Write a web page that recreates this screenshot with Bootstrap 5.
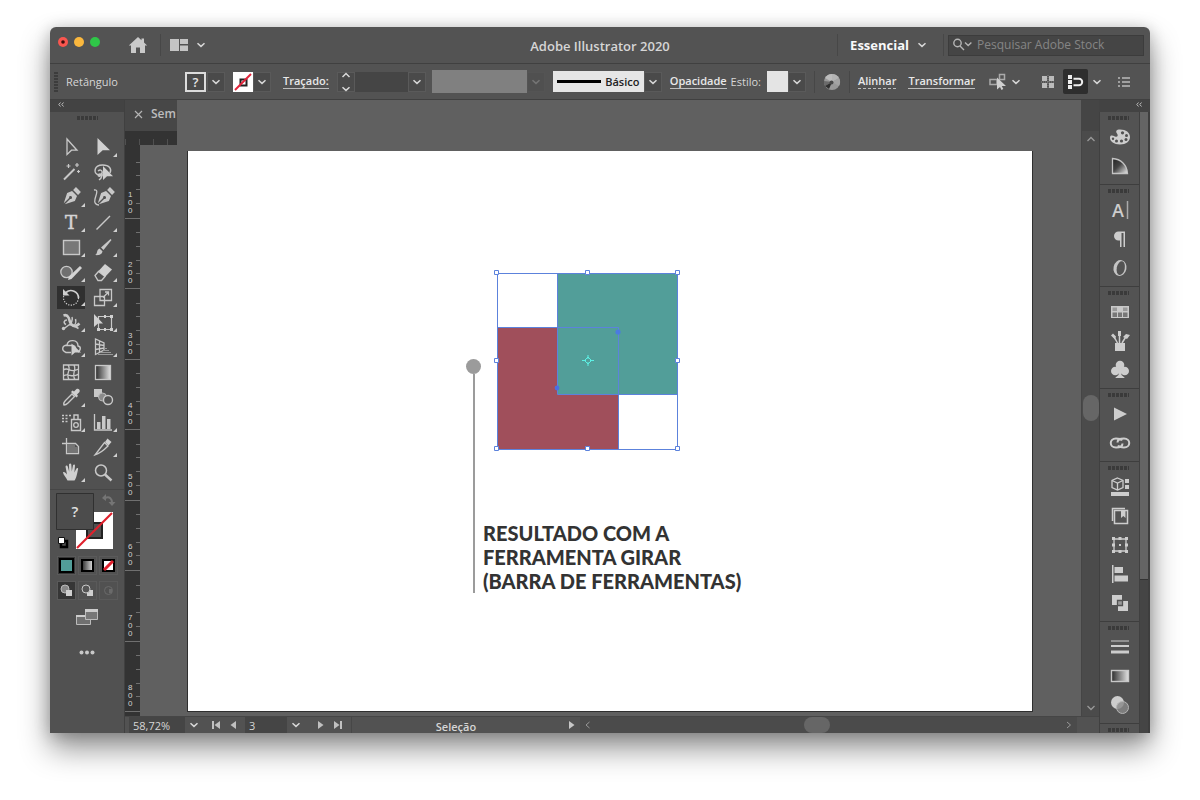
<!DOCTYPE html>
<html lang="pt-BR">
<head>
<meta charset="utf-8">
<meta name="viewport" content="width=device-width, initial-scale=1">
<title>Adobe Illustrator 2020</title>
<link rel="stylesheet" href="https://cdn.jsdelivr.net/npm/bootstrap@5.3.0/dist/css/bootstrap.min.css">
<style>
  body { font-family: "Open Sans", "Noto Sans", sans-serif; font-size: 11px; line-height: 16px; color: #d6d6d6; background: #fff; padding: 27px 50px 67px; height: 100vh; overflow: hidden; }
  button, input, select { font: inherit; color: inherit; }
  button { background: none; border: 0; padding: 0; display: flex; align-items: center; justify-content: center; flex-shrink: 0; }
  svg { display: block; flex-shrink: 0; }
  .app { background: #535353; border-radius: 6px 6px 0 0; box-shadow: 0 16px 30px rgba(0,0,0,.42), 0 2px 16px rgba(0,0,0,.22); }
  .titlebar { height: 37px; border-bottom: 1px solid #404040; font-size: 13px; }
  .app-name { font-size: 13px; font-weight: 600; line-height: 16px; margin: 2px 0 0; }
  .lights { gap: 6px; padding: 0 0 6px 8px; }
  .light { width: 10px; height: 10px; border-radius: 50%; }
  .vline { width: 1px; height: 22px; background: #474747; flex-shrink: 0; }
  .search { width: 196px; height: 21px; background: #454545; border: 1px solid #3c3c3c; }
  .search input { background: none; border: 0; outline: 0; padding: 0; min-width: 0; font-size: 12px; }
  .search input::placeholder { color: #858585; opacity: 1; }
  .controls { height: 36px; border-bottom: 1px solid #404040; }
  .controls > * { flex-shrink: 0; }
  .space-6 { margin-right: 6px; }
  .space-12 { margin-right: 12px; }
  .object-kind { width: 119px; }
  .grip-v { width: 4px; height: 20px; background: repeating-linear-gradient(#3c3c3c 0 2px, #535353 2px 3px); }
  .grip-h { height: 4px; width: 21px; background: repeating-linear-gradient(90deg, #3a3a3a 0 3px, #535353 3px 4px); }
  .drop { width: 18px; height: 20px; background: #4a4a4a; border: 1px solid #5a5a5a; }
  .field { height: 20px; background: #454545; border: 0; border-radius: 0; padding: 0 4px; }
  .lbl { color: #e8e8e8; font-weight: 600; text-decoration: none; line-height: 14px; border-bottom: 1px solid #bdbdbd; }
  .lbl:hover { color: #fff; }
  .dotted { border-bottom-style: dashed; }
  .strip { height: 12px; background: #434343; color: #c4c4c4; }
  .tools { width: 75px; border-right: 1px solid #404040; background: #515151; }
  .tools > .grip-h { margin: 4px 0 15px; }
  .rule { width: 100%; height: 1px; background: #464646; }
  .tool-grid { display: grid; grid-template-columns: 28px 28px; column-gap: 4px; grid-auto-rows: 25px; }
  .tool { position: relative; }
  .tool.more::after { content: ""; position: absolute; right: 0; bottom: 3px; border: 2px solid; border-color: transparent #d0d0d0 #d0d0d0 transparent; }
  .tool.active { background: #303030; margin: 1px 0; }
  .mini { width: 19px; height: 19px; border: 1px solid #5a5a5a; }
  .mini.on { background: #363636; }
  .mini-row { gap: 2px; margin-top: 6px; }
  .document { background: #606060; }
  .tab { width: 52px; height: 31px; background: #474747; font-size: 12px; font-weight: 600; color: #bdbdbd; white-space: nowrap; padding: 0 0 3px 9px; }
  .hruler { width: 52px; height: 14px; background: repeating-linear-gradient(90deg, #505050 0 1px, transparent 1px 14px) 0 8px no-repeat #333; }
  .vruler { width: 15px; background: #333; font-size: 8px; line-height: 8px; color: #d0d0d0; padding: 3px 0 4px; font-family: "Liberation Sans", sans-serif; }
  .vruler > div { display: flex; flex-direction: column; justify-content: flex-end; flex: 1 1 0; width: 100%; padding: 0 0 3px 3px; border-bottom: 1px solid #707070;
    background: linear-gradient(#707070, #707070) right 20%/4px 1px no-repeat, linear-gradient(#707070, #707070) right 40%/4px 1px no-repeat, linear-gradient(#707070, #707070) right 60%/4px 1px no-repeat, linear-gradient(#707070, #707070) right 80%/4px 1px no-repeat; }
  .artboard { background: #fff; border: 1px solid #2f2f2f; border-width: 0 1px 1px; margin: 6px 48px 4px 47px; color: #333; padding: 119px 0 0 278px; }
  .pin { width: 15px; padding-top: 89px; }
  .pin-head { width: 15px; height: 15px; border-radius: 50%; background: #9b9b9b; flex-shrink: 0; }
  .pin-line { width: 2px; background: #9b9b9b; }
  .shapes { margin-left: 12px; }
  .caption-text { font-family: Lato, sans-serif; font-weight: 900; font-size: 20px; line-height: 24px; margin: 69px 0 0 2px; white-space: nowrap; }
  .scroll-v { width: 18px; background: #4b4b4b; border-left: 1px solid #454545; }
  .scroll-v .cap { height: 31px; background: #454545; width: 100%; }
  .scroll-v .before { flex: 25 0 0; }
  .scroll-v .after { flex: 28 0 0; }
  .knob { background: #666; border-radius: 8px; }
  .status { height: 17px; overflow: hidden; background: #525252; border-top: 1px solid #464646; }
  .status .field { height: 16px; line-height: 19px; font-size: 11px; }
  .status-text { width: 208px; padding-top: 3px; }
  .scroll-h { background: #4b4b4b; margin: 0 22px 0 4px; }
  .dock { width: 51px; }
  .panels { width: 41px; border: 1px solid #404040; border-width: 0 1px; overflow: hidden; }
  .panel { border-bottom: 1px solid #3e3e3e; padding: 4px 0 4px; flex-shrink: 0; display: flex; flex-direction: column; align-items: center; }
  .panel button { height: 29px; width: 39px; }
  .panel .grip-h { margin-bottom: 2px; margin-right: 3px; }
  .side { background: #454545; border-right: 2px solid #3e3e3e; }
  .side-thumb { height: 468px; background: #646464; border-bottom: 1px solid #333; }
</style>
</head>
<body>
<svg width="0" height="0" class="position-absolute" aria-hidden="true">
  <symbol id="down" viewBox="0 0 10 6"><path d="M1.5 1.2 5 4.4 8.500 1.200" fill="none" stroke="#d8d8d8" stroke-width="1.500"/></symbol>
  <symbol id="nib" viewBox="0 0 28 25"><g transform="rotate(45 14 12)"><path d="M10.500 1.500h7v4h-7z" fill="#c8c8c8"/><path d="M10.500 7h7l2 5-4.800 9.500V14a1.500 1.500 0 1 0-1.400 0v7.500L8.500 12z" fill="#c8c8c8"/></g></symbol>
  <linearGradient id="g1"><stop offset="0" stop-color="#2c2c2c"/><stop offset="1" stop-color="#e2e2e2"/></linearGradient>
  <linearGradient id="g2" x1="0" y1="0" x2="1" y2="1"><stop offset="0" stop-color="#222"/><stop offset=".45" stop-color="#444"/><stop offset="1" stop-color="#eee"/></linearGradient>
</svg>

<main class="app d-flex flex-column h-100">
  <header class="titlebar d-flex align-items-center flex-shrink-0">
    <div class="col d-flex align-items-center">
      <div class="lights d-flex">
        <button class="light" style="background:#f9564f" aria-label="Fechar"><svg width="4" height="4"><circle cx="2" cy="2" r="1.800" fill="#3c0d0b"/></svg></button>
        <button class="light" style="background:#fbb83e" aria-label="Minimizar"></button>
        <button class="light" style="background:#2fc748" aria-label="Ampliar"></button>
      </div>
      <button class="ms-4 ps-1 space-12" aria-label="Início"><svg width="20" height="18" viewBox="0 0 20 18"><path d="M10 1 0.800 9.500H3V17h5v-5.500h4V17h5V9.500h2.200L16 6.500V2.500h-2.500v1.700z" fill="#c9c9c9"/></svg></button>
      <span class="vline"></span>
      <button class="ps-2 gap-2" aria-label="Organizar documentos"><svg width="19" height="12"><path d="M1 0h9v12H1zM11 0h8v5h-8zM11 6.500h8V12h-8z" fill="#c4c4c4"/></svg><svg width="10" height="6"><use href="#down"/></svg></button>
    </div>
    <h1 class="app-name">Adobe Illustrator 2020</h1>
    <div class="col d-flex align-items-center justify-content-end">
      <span class="vline"></span>
      <button class="fw-bold text-light ms-2 me-3 gap-2 ps-1">Essencial <svg width="10" height="6"><use href="#down"/></svg></button>
      <span class="vline"></span>
      <div class="search d-flex align-items-center ms-1 space-6 px-1">
        <svg width="20" height="14" viewBox="0 0 20 14"><circle cx="4.500" cy="5" r="3.700" fill="none" stroke="#b5b5b5" stroke-width="1.400"/><path d="m7 8 4 4M12 4.500l3.200 3 3.200-3" fill="none" stroke="#b5b5b5" stroke-width="1.400"/></svg>
        <input class="flex-fill ps-1" type="text" placeholder="Pesquisar Adobe Stock" aria-label="Pesquisar Adobe Stock">
      </div>
    </div>
  </header>

  <section class="controls d-flex align-items-center flex-shrink-0" aria-label="Controle">
    <span class="grip-v ms-1 me-2"></span>
    <span class="object-kind">Retângulo</span>
    <button aria-label="Preenchimento"><svg width="22" height="20"><rect x="1" y="1" width="19" height="18" fill="#4a4a4a" stroke="#dcdcdc" stroke-width="2"/><text x="10.500" y="15" font-size="13" font-weight="600" text-anchor="middle" fill="#e4e4e4">?</text></svg></button>
    <button class="drop me-2" aria-label="Opções de preenchimento"><svg width="10" height="6"><use href="#down"/></svg></button>
    <button aria-label="Traço"><svg width="20" height="20"><path d="M0 0h20v20H0z" fill="#fff"/><path d="M7.500 7.500h6v6h-6z" fill="#fff" stroke="#222" stroke-width="2"/><path d="M2 18 18 2" stroke="#e2243b" stroke-width="2"/></svg></button>
    <button class="drop space-12" aria-label="Opções de traço"><svg width="10" height="6"><use href="#down"/></svg></button>
    <a class="lbl" href="#">Traçado:</a>
    <button class="drop flex-column gap-2 ms-2" aria-label="Ajustar espessura"><svg width="10" height="6" viewBox="0 0 10 6"><path d="M1.500 5 5 1.500 8.500 5" fill="none" stroke="#d8d8d8" stroke-width="1.500"/></svg><svg width="10" height="6"><use href="#down"/></svg></button>
    <input class="field" style="width:53px" type="text" aria-label="Espessura">
    <button class="drop space-6" aria-label="Espessuras"><svg width="10" height="6"><use href="#down"/></svg></button>
    <span style="width:95px;height:23px;background:#808080"></span>
    <button class="drop me-2 opacity-25" aria-label="Perfil"><svg width="10" height="6"><use href="#down"/></svg></button>
    <button class="px-1" style="width:91px;height:21px;background:#e6e6e6;color:#222;font-weight:600" aria-label="Pincel Básico"><svg width="44" height="3"><path d="M0 0h44v3H0z"/></svg><span class="ms-1">Básico</span></button>
    <button class="drop me-2" aria-label="Pincéis"><svg width="10" height="6"><use href="#down"/></svg></button>
    <a class="lbl me-1" href="#">Opacidade</a>
    <span class="space-6">Estilo:</span>
    <button style="width:21px;height:21px;background:#e4e4e4" aria-label="Estilo gráfico"></button>
    <button class="drop me-2" aria-label="Estilos"><svg width="10" height="6"><use href="#down"/></svg></button>
    <span class="vline me-2"></span>
    <button class="me-2" aria-label="Recolorir arte"><svg width="18" height="18"><circle cx="9" cy="9" r="8" fill="#999"/><path d="M9 9V1a8 8 0 0 1 7 4z" fill="#b4b4b4"/><path d="M9 9 16 5a8 8 0 0 1 0 8z" fill="#a4a4a4"/><path d="M9 9 2 5A8 8 0 0 1 9 1z" fill="#bcbcbc"/><path d="m9 9-7 4a8 8 0 0 1-1-5z" fill="#6a6a6a"/><path d="m9 9-3 7-4-3z" fill="#2f2f2f"/><circle cx="8.500" cy="9.500" r="2" fill="#484848"/></svg></button>
    <span class="vline me-2"></span>
    <a class="lbl dotted space-12" href="#">Alinhar</a>
    <a class="lbl" href="#">Transformar</a>
    <button class="ms-auto me-1" aria-label="Isolar"><svg width="18" height="18"><path d="M1 6.500h7v5H1zM10.500 1.500h5v5h-5z" fill="none" stroke="#aaa" stroke-width="1.500"/><path d="M8 4.500v12l3-2.500 1.500 3 1.800-1-1.500-3H17z" fill="#d0d0d0"/></svg></button>
    <button class="me-3" aria-label="Opções"><svg width="10" height="6"><use href="#down"/></svg></button>
    <button class="mx-2 ms-1" aria-label="Pixels"><svg width="14" height="14"><path d="M1 1h5v5H1zM8 1h5v5H8zM1 8h5v5H1zM8 8h5v5H8z" fill="#bbb"/><path d="M7 0v14M0 7h14" stroke="#888" stroke-dasharray="1 1"/></svg></button>
    <button style="width:25px;height:25px;background:#2e2e2e;border-radius:2px" aria-label="Encaixar"><svg width="17" height="16"><path d="M1 1h4v4H1zM1 6h4v4H1zM1 11h4v4H1z" fill="#eee"/><path d="M6.500 4.800H12a3.200 3.200 0 0 1 0 6.400H6.500" fill="none" stroke="#eee" stroke-width="2"/></svg></button>
    <button class="space-12 ps-1" aria-label="Opções de encaixe"><svg width="10" height="6"><use href="#down"/></svg></button>
    <button class="me-3 px-1" aria-label="Menu"><svg width="12" height="10"><path d="M0 1h2M0 5h2M0 9h2M4 1h8M4 5h8M4 9h8" stroke="#bbb" stroke-width="1.500"/></svg></button>
  </section>

  <div class="d-flex flex-fill overflow-hidden" style="min-height:0">
    <aside class="tools d-flex flex-column flex-shrink-0 align-items-center" aria-label="Ferramentas">
      <div class="strip w-100 ps-2 flex-shrink-0"><svg width="6" height="9"><path d="M2.500 2.500.8 4.500l1.700 2M5.500 2.500l-1.700 2 1.700 2" fill="none" stroke="#bbb"/></svg></div>
      <span class="grip-h"></span>
      <div class="tool-grid">
        <button class="tool" aria-label="Seleção"><svg width="28" height="25"><path d="M10 4v15.500l4.500-4.300H20z" fill="none" stroke="#c8c8c8" stroke-width="1.300"/></svg></button>
        <button class="tool more" aria-label="Seleção direta"><svg width="28" height="25"><path d="M8.500 3v17l5.200-4.800H21z" fill="#d0d0d0"/></svg></button>
        <button class="tool" aria-label="Varinha mágica"><svg width="28" height="25"><path d="M7 19.500 17.500 9" stroke="#c8c8c8" stroke-width="2"/><path d="M11.500 4v4M9.500 6h4M20 3v4M18 5h4M21.500 10v3M20 11.500h3" stroke="#c8c8c8" stroke-width="1.200"/></svg></button>
        <button class="tool" aria-label="Laço"><svg width="28" height="25"><path d="M14 15H9.500C4 13 5 5 13.500 5c7 0 9.500 4 7.500 8M9 11c4-3 6 2 2 5-2 1-3-2 0-2s2 4-1 6" fill="none" stroke="#c8c8c8" stroke-width="1.400"/><path d="M14 6v14l4-3.800h6z" fill="#d0d0d0"/></svg></button>
        <button class="tool more" aria-label="Caneta"><svg width="28" height="25"><use href="#nib"/></svg></button>
        <button class="tool" aria-label="Curvatura"><svg width="28" height="25"><use href="#nib" x="2"/><path d="M5 5c5-1 2 5 1 9s1 6 4 6" fill="none" stroke="#c8c8c8" stroke-width="1.300"/></svg></button>
        <button class="tool more" aria-label="Texto"><svg width="28" height="25"><text x="14" y="19" text-anchor="middle" font-family="DejaVu Serif" font-weight="400" font-size="18" fill="#d4d4d4" stroke="#d4d4d4" stroke-width=".5">T</text></svg></button>
        <button class="tool more" aria-label="Linha"><svg width="28" height="25"><path d="M7.500 19.500 21 6" stroke="#c8c8c8" stroke-width="1.400"/></svg></button>
        <button class="tool more" aria-label="Retângulo"><svg width="28" height="25"><rect x="6.500" y="5.500" width="16" height="14" fill="#787878" stroke="#c8c8c8" stroke-width="1.400"/></svg></button>
        <button class="tool more" aria-label="Pincel"><svg width="28" height="25"><path d="m12 12.500 9.500-8.500 1 1-8 10zM6 20c3-1 1-5 4.500-6.500l3 2.700C13 20 9 20.500 6 20z" fill="#c8c8c8"/></svg></button>
        <button class="tool more" aria-label="Shaper"><svg width="28" height="25"><circle cx="9.500" cy="12" r="5.700" fill="#707070" stroke="#c8c8c8" stroke-width="1.300"/><path d="m11 20 1-3.500L23 6l2 2-10.500 11z" fill="#d4d4d4"/></svg></button>
        <button class="tool more" aria-label="Borracha"><svg width="28" height="25"><path d="m6 15.500 3.500-4 6.500 5-3.500 4H9z" fill="none" stroke="#c8c8c8" stroke-width="1.300"/><path d="m9.500 11 6.500-7 7 5.500-7 7.500z" fill="#d0d0d0"/></svg></button>
        <button class="tool more active" aria-label="Girar"><svg width="28" height="23"><path d="M9 6.500A7.500 7.500 0 0 1 21.500 12" fill="none" stroke="#d0d0d0" stroke-width="1.700"/><path d="M21.500 12A7.500 7.500 0 1 1 7 9" fill="none" stroke="#d0d0d0" stroke-width="1.200" stroke-dasharray="1.200 1.400"/><path d="M6 3v6.500h6.500z" fill="#d0d0d0"/></svg></button>
        <button class="tool more" aria-label="Escala"><svg width="28" height="25"><path d="M5.500 11.500h10v9h-10zM11 4.500h11.500v11H11zM14 12.500l5-5M16 7h3.500v3.500" fill="none" stroke="#c8c8c8" stroke-width="1.300"/></svg></button>
        <button class="tool more" aria-label="Largura"><svg width="28" height="25"><path d="M6.500 5.500c3-1 4 0 5 2s1 5 3 7 5 2 8-1" fill="none" stroke="#c8c8c8" stroke-width="2.600"/><path d="M10 10c-3 0-4 3-1 4.500M12 15c2 0 4-6 3-8M16 16c3-1 3-5 2.500-7M6.500 19l6-4.500 4 1 5 3" fill="none" stroke="#c8c8c8" stroke-width="1.500"/><circle cx="6.500" cy="18.500" r="1.700" fill="#c8c8c8"/></svg></button>
        <button class="tool more" aria-label="Transformação livre"><svg width="28" height="25"><path d="M9.500 6.500h13v13h-13z" fill="none" stroke="#c8c8c8" stroke-width="1.200"/><path d="M5 4v13l4-3.500h5zM21 5h3v3h-3zM21 18h3v3h-3zM8 18h3v3H8zM15 5h2v3h-2zM15 18h2v3h-2z" fill="#d0d0d0"/></svg></button>
        <button class="tool more" aria-label="Construtor de formas"><svg width="28" height="25"><path d="M14 17.500H9c-5-2-4-7 1-7.500 1-6 11-6 11 1 4 1 2 5 0 6M8 10.500h8c3 1 3 3 2 5" fill="none" stroke="#c8c8c8" stroke-width="1.400"/><path d="M14.500 8.500v12l3.500-3h6z" fill="#d0d0d0"/></svg></button>
        <button class="tool more" aria-label="Perspectiva"><svg width="28" height="25"><path d="M6.500 4v15.500L15 15V8zM6.500 9l8.500 1.500M6.500 14.500 15 13M10.500 6v11" fill="none" stroke="#c8c8c8" stroke-width="1.300"/><path d="M15 13.500h3M14 15.500h6M12 17.500h10M9 19.500h15" stroke="#999"/></svg></button>
        <button class="tool" aria-label="Malha"><svg width="28" height="25"><path d="M6.500 5h15v14.500h-15zM6.500 10c5-4 6 4 15-1M6.500 16c5-4 8 3 15-2M11 5c4 5-3 8 1 14.500M17 5c3 5-3 9 1 14.500" fill="none" stroke="#c8c8c8" stroke-width="1.300"/></svg></button>
        <button class="tool" aria-label="Degradê"><svg width="28" height="25"><rect x="6.500" y="5.500" width="15" height="14" fill="url(#g1)" stroke="#c8c8c8" stroke-width="1.300"/></svg></button>
        <button class="tool more" aria-label="Conta-gotas"><svg width="28" height="25"><path d="M7 20c-1-2 0-3 1.500-4.500L15 9l2.500 2.500-6.500 6.500c-1.500 1.500-2.500 2-4 2z" fill="none" stroke="#c8c8c8" stroke-width="1.400"/><path d="m14 7 1.500-1.500 1.500 1 2.500-2.500c2-1 4 1 3 3L20 9.500l1 1.500-1.500 1.500z" fill="#d0d0d0"/></svg></button>
        <button class="tool" aria-label="Mistura"><svg width="28" height="25"><path d="M5 4h8v8H5z" fill="#c8c8c8"/><circle cx="13.500" cy="12" r="4" fill="#8a8a8a" stroke="#bbb"/><circle cx="19" cy="15" r="4.500" fill="#525252" stroke="#c8c8c8" stroke-width="1.400"/></svg></button>
        <button class="tool more" aria-label="Pulverizador"><svg width="28" height="25"><path d="M14.500 9.500h9v11h-9zM17 9V5h4v4" fill="none" stroke="#c8c8c8" stroke-width="1.400"/><circle cx="19" cy="15" r="2.300" fill="none" stroke="#c8c8c8" stroke-width="1.300"/><path d="M5 5.500h2M8.500 5.500h2M12 5.500h2M5 8.500h2M8.500 8.500h2M5 11.500h2M8.500 11.500h2" stroke="#c8c8c8" stroke-width="1.600"/></svg></button>
        <button class="tool more" aria-label="Gráfico de colunas"><svg width="28" height="25"><path d="M5.500 4v16H23" fill="none" stroke="#c8c8c8" stroke-width="1.300"/><path d="M8 12h3.500v7H8zM13 6h3.500v13H13zM18 9h3.500v10H18z" fill="#c8c8c8"/></svg></button>
        <button class="tool" aria-label="Prancheta"><svg width="28" height="25"><path d="M9.500 3v15.500h12v-7l-3-3H5" fill="none" stroke="#c8c8c8" stroke-width="1.300"/><path d="M10 9h8v3h3v6H10z" fill="#757575"/></svg></button>
        <button class="tool more" aria-label="Fatia"><svg width="28" height="25"><path d="m6 20 9.500-12.500 3.500 3.500c-4 4-7 7-13 9z" fill="none" stroke="#c8c8c8" stroke-width="1.300"/><path d="m16 7 2.500-3.500 4 3.500-3 3.500z" fill="#d0d0d0"/></svg></button>
        <button class="tool more" aria-label="Mão"><svg width="28" height="25"><path d="M10.500 20.500C9 17.500 6.500 15 6 12.500c1-1 2.500 0 4 2L8.500 6.500c.5-1.500 2-1 2.300.3l1.400 5L12 4.500c.5-1.500 2-1.500 2.300 0l.5 7 1.200-6.300c.6-1.200 2-1 2 .4l-.6 7 2-4c.8-1 2-.5 1.700.7-1 4-1.600 9-3.600 11.200z" fill="#d0d0d0"/></svg></button>
        <button class="tool" aria-label="Zoom"><svg width="28" height="25"><circle cx="12" cy="10.500" r="5.500" fill="none" stroke="#c8c8c8" stroke-width="1.500"/><path d="m16 14.500 6.500 6" stroke="#c8c8c8" stroke-width="2.400"/></svg></button>
      </div>
      <span class="rule mt-1"></span>
      <svg width="62" height="60" viewBox="0 0 62 60" role="img" aria-label="Preenchimento e traço">
        <path d="M20 22h37v37H20z" fill="#fff"/><path d="M31 33h15v15H31z" fill="#515151" stroke="#222" stroke-width="2"/><path d="m21 58 35-35" stroke="#e0202c" stroke-width="2.200"/>
        <path d="M.5 3.500h37v36H.5z" fill="#4c4c4c" stroke="#303030"/><text x="19" y="27" text-anchor="middle" font-size="15" font-weight="600" fill="#e0e0e0">?</text>
        <path d="M49 8c5-2 7 1 7 5" fill="none" stroke="#757575" stroke-width="2"/><path d="m46 8 4-4v7zM52.500 12h7l-3.500 4z" fill="#757575"/>
        <path d="M5 51h6v6H5z" fill="#515151" stroke="#000" stroke-width="2.500"/><path d="M2.500 47.500h6v6h-6z" fill="#fff" stroke="#111"/>
      </svg>
      <div class="mini-row d-flex">
        <button class="mini on" aria-label="Cor"><svg width="15" height="15"><path d="M1 1h13v13H1z" fill="#529e99" stroke="#000" stroke-width="2"/></svg></button>
        <button class="mini" aria-label="Degradê"><svg width="15" height="15"><path d="M2 2h11v11H2z" fill="url(#g1)" stroke="#000" stroke-width="2"/></svg></button>
        <button class="mini" aria-label="Nenhum"><svg width="15" height="15"><path d="M2 2h11v11H2z" fill="#fff" stroke="#000" stroke-width="2"/><path d="m3 12 9-9" stroke="#e0202c" stroke-width="3"/></svg></button>
      </div>
      <div class="mini-row d-flex mb-2">
        <button class="mini on" aria-label="Desenho normal"><svg width="13" height="13"><circle cx="5" cy="5" r="4" fill="#888" stroke="#bbb"/><path d="M6 6h6v6H6z" fill="#d0d0d0"/></svg></button>
        <button class="mini" aria-label="Desenhar atrás"><svg width="13" height="13"><path d="M6 6h6v6H6z" fill="#d0d0d0"/><circle cx="5" cy="5" r="4" fill="#555" stroke="#c8c8c8"/></svg></button>
        <button class="mini" aria-label="Desenhar dentro"><svg width="13" height="13"><circle cx="6.500" cy="6.500" r="4" fill="none" stroke="#6a6a6a"/><path d="M7 5h3v4H7z" fill="#6a6a6a"/></svg></button>
      </div>
      <button aria-label="Modo de tela"><svg width="24" height="18"><path d="M1.500 7.500h14v9h-14z" fill="#707070" stroke="#bbb"/><path d="M1 7h15v2H1z" fill="#ccc"/><path d="M10.500 1.500h12v10h-12z" fill="#777" stroke="#bbb"/><path d="M10 1h13v3H10z" fill="#ccc"/></svg></button>
      <button class="mt-3 pt-2" aria-label="Editar barra de ferramentas"><svg width="16" height="5"><circle cx="2.500" cy="2.500" r="2" fill="#c8c8c8"/><circle cx="8" cy="2.500" r="2" fill="#c8c8c8"/><circle cx="13.500" cy="2.500" r="2" fill="#c8c8c8"/></svg></button>
    </aside>

    <section class="document d-flex flex-fill flex-column" style="min-width:0">
      <div class="d-flex flex-fill" style="min-height:0">
        <div class="d-flex flex-column flex-fill" style="min-width:0">
          <div class="tab d-flex align-items-center gap-2"><button aria-label="Fechar documento"><svg width="9" height="9"><path d="m1 1 7 7M8 1 1 8" stroke="#b4b4b4" stroke-width="1.200"/></svg></button><span>Sem</span></div>
          <div class="hruler flex-shrink-0"></div>
          <div class="d-flex flex-fill" style="min-height:0">
            <div class="vruler d-flex flex-column flex-shrink-0">
              <div>1<br>0<br>0</div><div>2<br>0<br>0</div><div>3<br>0<br>0</div><div>4<br>0<br>0</div><div>5<br>0<br>0</div><div>6<br>0<br>0</div><div>7<br>0<br>0</div><div>8<br>0<br>0</div>
            </div>
            <div class="artboard flex-fill d-flex align-items-start">
              <div class="d-flex">
                <div class="pin d-flex flex-column align-items-center"><span class="pin-head"></span><span class="pin-line flex-fill"></span></div>
                <div>
                  <svg class="shapes" width="190" height="182" viewBox="0 0 190 182" role="img" aria-label="Dois quadrados sobrepostos selecionados">
                    <path d="M4 58h121v121H4z" fill="#a04f5b"/><path d="M64 3h121v121H64z" fill="#529e99"/>
                    <path d="M4.500 3.500h180v176H4.500zM4.500 57.500h121v122M64.500 3.500v121h120" fill="none" stroke="#5c82dc"/>
                    <g fill="#fff" stroke="#5c82dc"><path d="M1.500.5h4v4h-4zM92.500.5h4v4h-4zM182.500.5h4v4h-4zM1.500 88.500h4v4h-4zM182.500 88.500h4v4h-4zM1.500 176.500h4v4h-4zM92.500 176.500h4v4h-4zM182.500 176.500h4v4h-4z"/></g>
                    <circle cx="125" cy="62" r="2.600" fill="#4b7be0"/><circle cx="64" cy="118" r="2.400" fill="#4b6fe0"/>
                    <path d="M95 85v4M95 92v4M89 90.500h4M97 90.500h4" stroke="#5cf0e4"/><path d="m95 87 3.500 3.500L95 94l-3.500-3.500z" fill="none" stroke="#5cf0e4"/>
                  </svg>
                  <p class="caption-text">RESULTADO COM A<br>FERRAMENTA GIRAR<br>(BARRA DE FERRAMENTAS)</p>
                </div>
              </div>
            </div>
          </div>
        </div>
        <div class="scroll-v d-flex flex-column align-items-center flex-shrink-0">
          <span class="cap flex-shrink-0"></span>
          <svg class="mt-1" width="10" height="8"><path d="M1.500 6 5 2.500 8.500 6" fill="none" stroke="#999" stroke-width="1.300"/></svg>
          <span class="before"></span>
          <span class="knob flex-shrink-0" style="width:16px;height:26px"></span>
          <span class="after"></span>
          <svg class="mb-1" width="10" height="8"><path d="M1.500 2 5 5.500 8.500 2" fill="none" stroke="#999" stroke-width="1.300"/></svg>
        </div>
      </div>
      <footer class="status d-flex align-items-center flex-shrink-0 ps-1">
        <input class="field" style="width:56px" type="text" value="58,72%" aria-label="Nível de zoom">
        <button class="mx-1 me-2" aria-label="Níveis de zoom"><svg width="10" height="6"><use href="#down"/></svg></button>
        <button class="ms-1" aria-label="Primeira prancheta"><svg width="10" height="10"><path d="M1 1h2v8H1zM9 1v8L3.500 5z" fill="#c0c0c0"/></svg></button>
        <button class="mx-2" aria-label="Prancheta anterior"><svg width="8" height="10"><path d="M7 1v8L1.500 5z" fill="#c0c0c0"/></svg></button>
        <input class="field" style="width:42px" type="text" value="3" aria-label="Prancheta">
        <button class="mx-1" aria-label="Pranchetas"><svg width="10" height="6"><use href="#down"/></svg></button>
        <button class="mx-2 ps-1" aria-label="Próxima prancheta"><svg width="8" height="10"><path d="M1 1v8l5.500-4z" fill="#c0c0c0"/></svg></button>
        <button aria-label="Última prancheta"><svg width="10" height="10"><path d="M1 1v8l5.500-4zM7 1h2v8H7z" fill="#c0c0c0"/></svg></button>
        <span class="vline ms-2"></span>
        <span class="status-text text-center fw-semibold">Seleção</span>
        <button class="ms-2" aria-label="Menu de status"><svg width="8" height="10"><path d="M1 1v8l5.500-4z" fill="#c8c8c8"/></svg></button>
        <div class="scroll-h d-flex align-items-center flex-fill h-100 justify-content-between px-1"><svg width="8" height="8"><path d="M5.500 1 2 4l3.500 3" fill="none" stroke="#999"/></svg><span class="knob me-4" style="width:26px;height:16px"></span><svg width="8" height="8"><path d="m2 1 3.500 3L2 7" fill="none" stroke="#999"/></svg></div>
      </footer>
    </section>

    <aside class="dock d-flex flex-column flex-shrink-0" aria-label="Painéis">
      <div class="strip d-flex justify-content-end pe-2 flex-shrink-0"><svg width="6" height="9"><path d="M2.500 2.500.8 4.500l1.700 2M5.500 2.500l-1.700 2 1.700 2" fill="none" stroke="#bbb"/></svg></div>
      <div class="d-flex flex-fill" style="min-height:0">
        <div class="panels">
          <div class="panel"><span class="grip-h"></span>
            <button aria-label="Cor"><svg width="22" height="18"><path d="M11 1.500c6 0 10 3 10 7.500S17 16.500 11 16.500 1 13.500 1 10s2.500-2.500 5-1.500 3.500-1 2-3-1-4 3-4z" fill="#cdcdcd"/><g fill="#515151"><circle cx="13.500" cy="4.800" r="1.600"/><circle cx="17.500" cy="7.500" r="1.500"/><circle cx="17" cy="11.500" r="1.500"/><circle cx="12.500" cy="13" r="1.600"/><circle cx="7.500" cy="13" r="1.500"/><circle cx="4" cy="10.800" r="1.200"/></g></svg></button>
            <button aria-label="Guia de cores"><svg width="18" height="18"><path d="M1.500 1.500C10 2 16 8 16.500 16.500h-15z" fill="url(#g2)" stroke="#c4c4c4" stroke-width="1.300"/></svg></button>
          </div>
          <div class="panel"><span class="grip-h"></span>
            <button aria-label="Caractere"><svg width="22" height="28"><text x="3" y="21" font-family="Open Sans" font-weight="600" font-size="18" fill="#cdcdcd">A</text><path d="M18.500 5v18" stroke="#aaa" stroke-width="1.500"/></svg></button>
            <button aria-label="Parágrafo"><svg width="16" height="18"><path d="M13 1.500H6.500a4.500 4.500 0 0 0 0 9H8V17h1.500V3h2v14H13z" fill="#cdcdcd"/></svg></button>
            <button aria-label="OpenType"><svg width="20" height="22"><g transform="rotate(12 10 11)"><ellipse cx="10" cy="11" rx="6.500" ry="8" fill="#c4c4c4"/><ellipse cx="10.800" cy="11" rx="4" ry="7" fill="#535353"/></g></svg></button>
          </div>
          <div class="panel"><span class="grip-h"></span>
            <button aria-label="Amostras"><svg width="18" height="14"><path d="M0 1h18v12H0z" fill="#c8c8c8"/><path d="M1.500 2.500H6V6H1.500zM12 2.500h4.500V6H12z" fill="#999"/><path d="M1.500 7.500H6V12H1.500zM7 7.500h4V12H7zM12 7.500h4.500V12H12z" fill="#777"/></svg></button>
            <button aria-label="Pincéis"><svg width="20" height="22"><path d="M5 13h10v8H5z" fill="#cdcdcd"/><path d="M7.500 13 3 5M9.500 13V2M12 13l5-8" stroke="#cdcdcd" stroke-width="1.500"/><path d="M1 5.500 3 3.500l3 3-1 3zM8 1h3v5H8zM13 7l3-3 4 1-3 4z" fill="#cdcdcd"/></svg></button>
            <button aria-label="Símbolos"><svg width="20" height="19"><circle cx="10" cy="5" r="4.300" fill="#cdcdcd"/><circle cx="5.300" cy="11" r="4.300" fill="#cdcdcd"/><circle cx="14.700" cy="11" r="4.300" fill="#cdcdcd"/><path d="M9 8h2l.5 7 3 2.500V18H5.500v-.5l3-2.500z" fill="#cdcdcd"/></svg></button>
          </div>
          <div class="panel"><span class="grip-h"></span>
            <button aria-label="Ações"><svg width="16" height="16"><path d="M2 1.500v13L15 8z" fill="#cdcdcd"/></svg></button>
            <button aria-label="Vínculos"><svg width="22" height="12"><path d="M9 8.500c1.500 2 3 2 6 2 7 0 7-9 0-9-4 0-6.500 1-6.500 4M13 3.500c-1.500-2-3-2-6-2-7 0-7 9 0 9 4 0 6.500-1 6.500-4" fill="none" stroke="#cdcdcd" stroke-width="2"/></svg></button>
          </div>
          <div class="panel"><span class="grip-h"></span>
            <button aria-label="Bibliotecas"><svg width="20" height="20"><path d="m7.500 1 5.500 2.500v7L7.500 13 2 10.500v-7z" fill="none" stroke="#cdcdcd" stroke-width="1.300"/><path d="m2 3.500 5.500 2.500 5.500-2.500M7.500 6v7" fill="none" stroke="#cdcdcd" stroke-width="1.300"/><path d="M15 2h4v4h-4zM15 8h4v4h-4zM1 15h18v4H1z" fill="#cdcdcd"/></svg></button>
            <button aria-label="Exportar ativos"><svg width="18" height="18"><path d="M3.500 3.500h13v13h-13zM1.500 14V1.500H14" fill="none" stroke="#cdcdcd" stroke-width="1.500"/><path d="M10 4h4.500v7l-2.200-2L10 11z" fill="#cdcdcd"/></svg></button>
            <button aria-label="Transformar"><svg width="18" height="18"><path d="M3 3h12v12H3z" fill="none" stroke="#cdcdcd" stroke-width="1.300"/><path d="M1 1h3v3H1zM7.500 1h3v3h-3zM14 1h3v3h-3zM1 7.500h3v3H1zM14 7.500h3v3h-3zM1 14h3v3H1zM7.500 14h3v3h-3zM14 14h3v3h-3zM8 8h2v2H8z" fill="#cdcdcd"/></svg></button>
            <button aria-label="Alinhar"><svg width="18" height="20"><path d="M1 1h1.500v18H1zM3.500 3H12v6H3.500zM3.500 11.500H17v6H3.500z" fill="#cdcdcd"/></svg></button>
            <button aria-label="Pathfinder"><svg width="18" height="18"><path d="M1 1h10v10H1zM7 7h10v10H7z" fill="#cdcdcd"/><path d="M6.500 6.500h5v5h-5z" fill="#999" stroke="#515151" stroke-width="1.300"/></svg></button>
          </div>
          <div class="panel"><span class="grip-h"></span>
            <button aria-label="Traçado"><svg width="20" height="16"><path d="M1 2h18" stroke="#cdcdcd"/><path d="M1 7h18" stroke="#cdcdcd" stroke-width="2"/><path d="M1 13h18" stroke="#cdcdcd" stroke-width="3"/></svg></button>
            <button aria-label="Degradê"><svg width="20" height="14"><rect x="1.500" y="1.500" width="17" height="11" fill="url(#g1)" stroke="#c8c8c8" stroke-width="1.400"/></svg></button>
            <button aria-label="Transparência"><svg width="20" height="20"><circle cx="7.500" cy="7.500" r="6.500" fill="#cdcdcd"/><circle cx="12.500" cy="12.500" r="6" fill="#888" fill-opacity=".8" stroke="#b4b4b4"/></svg></button>
          </div>
          <div class="panel"><span class="grip-h"></span></div>
        </div>
        <div class="side flex-fill"><div class="side-thumb"></div></div>
      </div>
    </aside>
  </div>
</main>
<script src="https://cdn.jsdelivr.net/npm/bootstrap@5.3.0/dist/js/bootstrap.bundle.min.js"></script>
</body>
</html>
